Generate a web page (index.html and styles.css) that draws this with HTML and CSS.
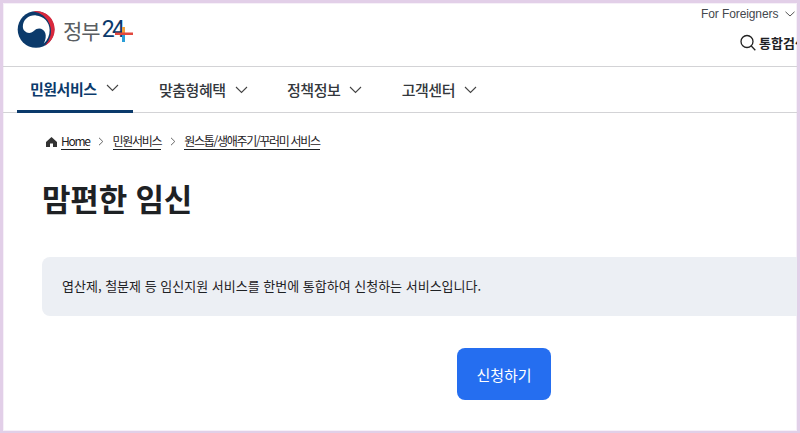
FILE: index.html
```html
<!DOCTYPE html>
<html lang="ko">
<head>
<meta charset="utf-8">
<title>맘편한 임신</title>
<link rel="stylesheet" href="styles.css">
</head>
<body>
<div class="frame">
  <header class="top">
    <a class="logo">
      <svg class="emblem" width="38" height="37" viewBox="0 0 38 38">
        <circle cx="19" cy="19" r="18.800" fill="#0b3a6b"/>
        <path d="M16 .4A18.800 18.800 0 0 1 28 35.600 20.500 20.500 0 0 0 16 .4z" fill="#d9283c"/>
        <path d="M5.500 16C5.500 9 11.500 4 19 4.500 27 5 33 11.500 33 19.500 33 25 31 30 27 33.500 29 29.500 29.500 25.500 28.500 22.500 27 18.500 23 17 19.500 18.500 17 20 15.500 22.500 12 22.500 8.500 22.500 5.500 20 5.500 16z" fill="#fff"/>
      </svg>
      <span class="wordmark"><span class="wm-ko">정부</span><span class="wm-num">24</span><svg class="wm-plus" width="18" height="15" viewBox="0 0 18 15"><rect x="7" y="0" width="3" height="6" fill="#f0a03c"/><rect x="7" y="8" width="3" height="7" fill="#2a9fd8"/><rect x="0" y="5.500" width="18" height="2.500" fill="#e2493f"/></svg></span>
    </a>
    <div class="utility">
      <a class="foreign">For Foreigners
        <svg width="10" height="6" viewBox="0 0 10 6"><path d="M.5.800 5 5 9.500.8" fill="none" stroke="#555" stroke-width="1"/></svg>
      </a>
      <a class="search">
        <svg width="16" height="17" viewBox="0 0 16 17"><circle cx="7" cy="7.500" r="6" fill="none" stroke="#222" stroke-width="1.300"/><path d="m11.300 12 4 4.300" stroke="#222" stroke-width="1.300"/></svg>
        <span>통합검색</span>
      </a>
    </div>
  </header>
  <nav class="gnb">
    <a class="gnb-item active">민원서비스<svg class="chev" width="13" height="8" viewBox="0 0 13 8"><path d="M1 1l5.500 5.500L12 1" fill="none" stroke="#444" stroke-width="1.100"/></svg></a>
    <a class="gnb-item">맞춤형혜택<svg class="chev" width="13" height="8" viewBox="0 0 13 8"><path d="M1 1l5.500 5.500L12 1" fill="none" stroke="#444" stroke-width="1.100"/></svg></a>
    <a class="gnb-item">정책정보<svg class="chev" width="13" height="8" viewBox="0 0 13 8"><path d="M1 1l5.500 5.500L12 1" fill="none" stroke="#444" stroke-width="1.100"/></svg></a>
    <a class="gnb-item">고객센터<svg class="chev" width="13" height="8" viewBox="0 0 13 8"><path d="M1 1l5.500 5.500L12 1" fill="none" stroke="#444" stroke-width="1.100"/></svg></a>
  </nav>
  <main class="content">
    <ol class="crumbs">
      <li class="crumb"><svg class="home" width="11" height="10" viewBox="0 0 11 10"><path d="M5.500 0 11 5v5H7V6.500H4V10H0V5z" fill="#333"/></svg><a class="crumb-link">Home</a></li>
      <li class="sep"><svg width="6" height="9" viewBox="0 0 6 9"><path d="M1 .8l3.800 3.700L1 8.200" fill="none" stroke="#666" stroke-width="1"/></svg></li>
      <li class="crumb"><a class="crumb-link">민원서비스</a></li>
      <li class="sep"><svg width="6" height="9" viewBox="0 0 6 9"><path d="M1 .8l3.800 3.700L1 8.200" fill="none" stroke="#666" stroke-width="1"/></svg></li>
      <li class="crumb"><a class="crumb-link">원스톱/생애주기/꾸러미 서비스</a></li>
    </ol>
    <h1 class="title">맘편한 임신</h1>
    <p class="desc">엽산제, 철분제 등 임신지원 서비스를 한번에 통합하여 신청하는 서비스입니다.</p>
    <div class="actions"><a class="apply">신청하기</a></div>
  </main>
</div>
</body>
</html>
```
FILE: styles.css
```css
* { box-sizing: border-box; }
html, body { margin: 0; padding: 0; height: 100%; }
body { background: #fff; font-family: "Noto Sans CJK KR", "Noto Sans", sans-serif; color: #1e2124; overflow: hidden; }
.frame { width: 800px; height: 433px; overflow: hidden; background: #fff; border: solid #e2cfe8; border-width: 3px 3px 2px 3px; box-shadow: inset 0 0 0 1px #f6f0f8; }
a { color: inherit; text-decoration: none; }

.top { height: 64px; display: flex; justify-content: space-between; border-bottom: 1px solid #d3d3d6; }
.logo { display: flex; align-items: flex-start; padding: 8px 0 0 14px; gap: 8px; }
.emblem { display: block; }
.wordmark { display: flex; align-items: center; height: 26px; margin-top: 6px; position: relative; }
.wm-ko { font-size: 21px; line-height: 26px; color: #5a5e62; letter-spacing: -1px; }
.wm-num { font-family: "Roboto", sans-serif; font-size: 23px; line-height: 26px; color: #0b3a6b; letter-spacing: -2.500px; margin-left: 2px; }
.wm-plus { position: absolute; right: -10px; top: 10px; }

.utility { width: 99px; display: flex; flex-direction: column; align-items: flex-start; flex: none; overflow: hidden; padding-top: 3px; }
.foreign { font-family: "Liberation Sans", sans-serif; font-size: 12px; line-height: 16px; color: #44484d; white-space: nowrap; margin-left: 3px; letter-spacing: -0.1px; display: flex; align-items: center; gap: 7px; }
.search { display: flex; align-items: center; gap: 3px; margin: 11px 0 0 42px; font-size: 13px; line-height: 19px; font-weight: 700; color: #1e2124; white-space: nowrap; }

.gnb { height: 46px; display: flex; padding-left: 14px; border-bottom: 1px solid #d3d3d6; }
.gnb-item { height: 46px; display: flex; align-items: center; gap: 9px; padding: 0 14px 1px 13px; margin-right: 12.500px; font-size: 15px; font-weight: 500; color: #33373c; letter-spacing: -0.5px; white-space: nowrap; }
.gnb-item.active { font-weight: 700; color: #0b3a6b; border-bottom: 3px solid #0b3a6b; padding-bottom: 1px; margin-right: 13.500px; }
.chev { display: block; flex: none; }

.content { padding: 0 0 0 39px; }
.crumbs { list-style: none; display: flex; margin: 0; padding: 20px 0 0 4px; height: 52px; align-items: flex-start; }
.crumb { display: flex; align-items: center; font-size: 12px; letter-spacing: -1.300px; color: #1e2124; line-height: 16px; gap: 4px; }
.home { display: block; }
.crumb-link { border-bottom: 1px solid #1e2124; display: block; }
.sep { width: 23px; display: flex; justify-content: center; padding-top: 4px; }
.title { margin: 10px 0 0; font-size: 31px; line-height: 46px; font-weight: 700; color: #1e2124; letter-spacing: -0.2px; }
.desc { margin: 36px 0 0; height: 59px; background: #eceff4; border-radius: 8px 0 0 8px; padding: 0 0 0 20px; font-size: 13px; line-height: 57px; color: #1e2124; }
.actions { display: flex; margin: 32px 0 0 415px; }
.apply { width: 94px; height: 52px; background: #256ef0; color: #fff; border-radius: 8px; font-size: 15px; display: flex; align-items: center; justify-content: center; }
```
